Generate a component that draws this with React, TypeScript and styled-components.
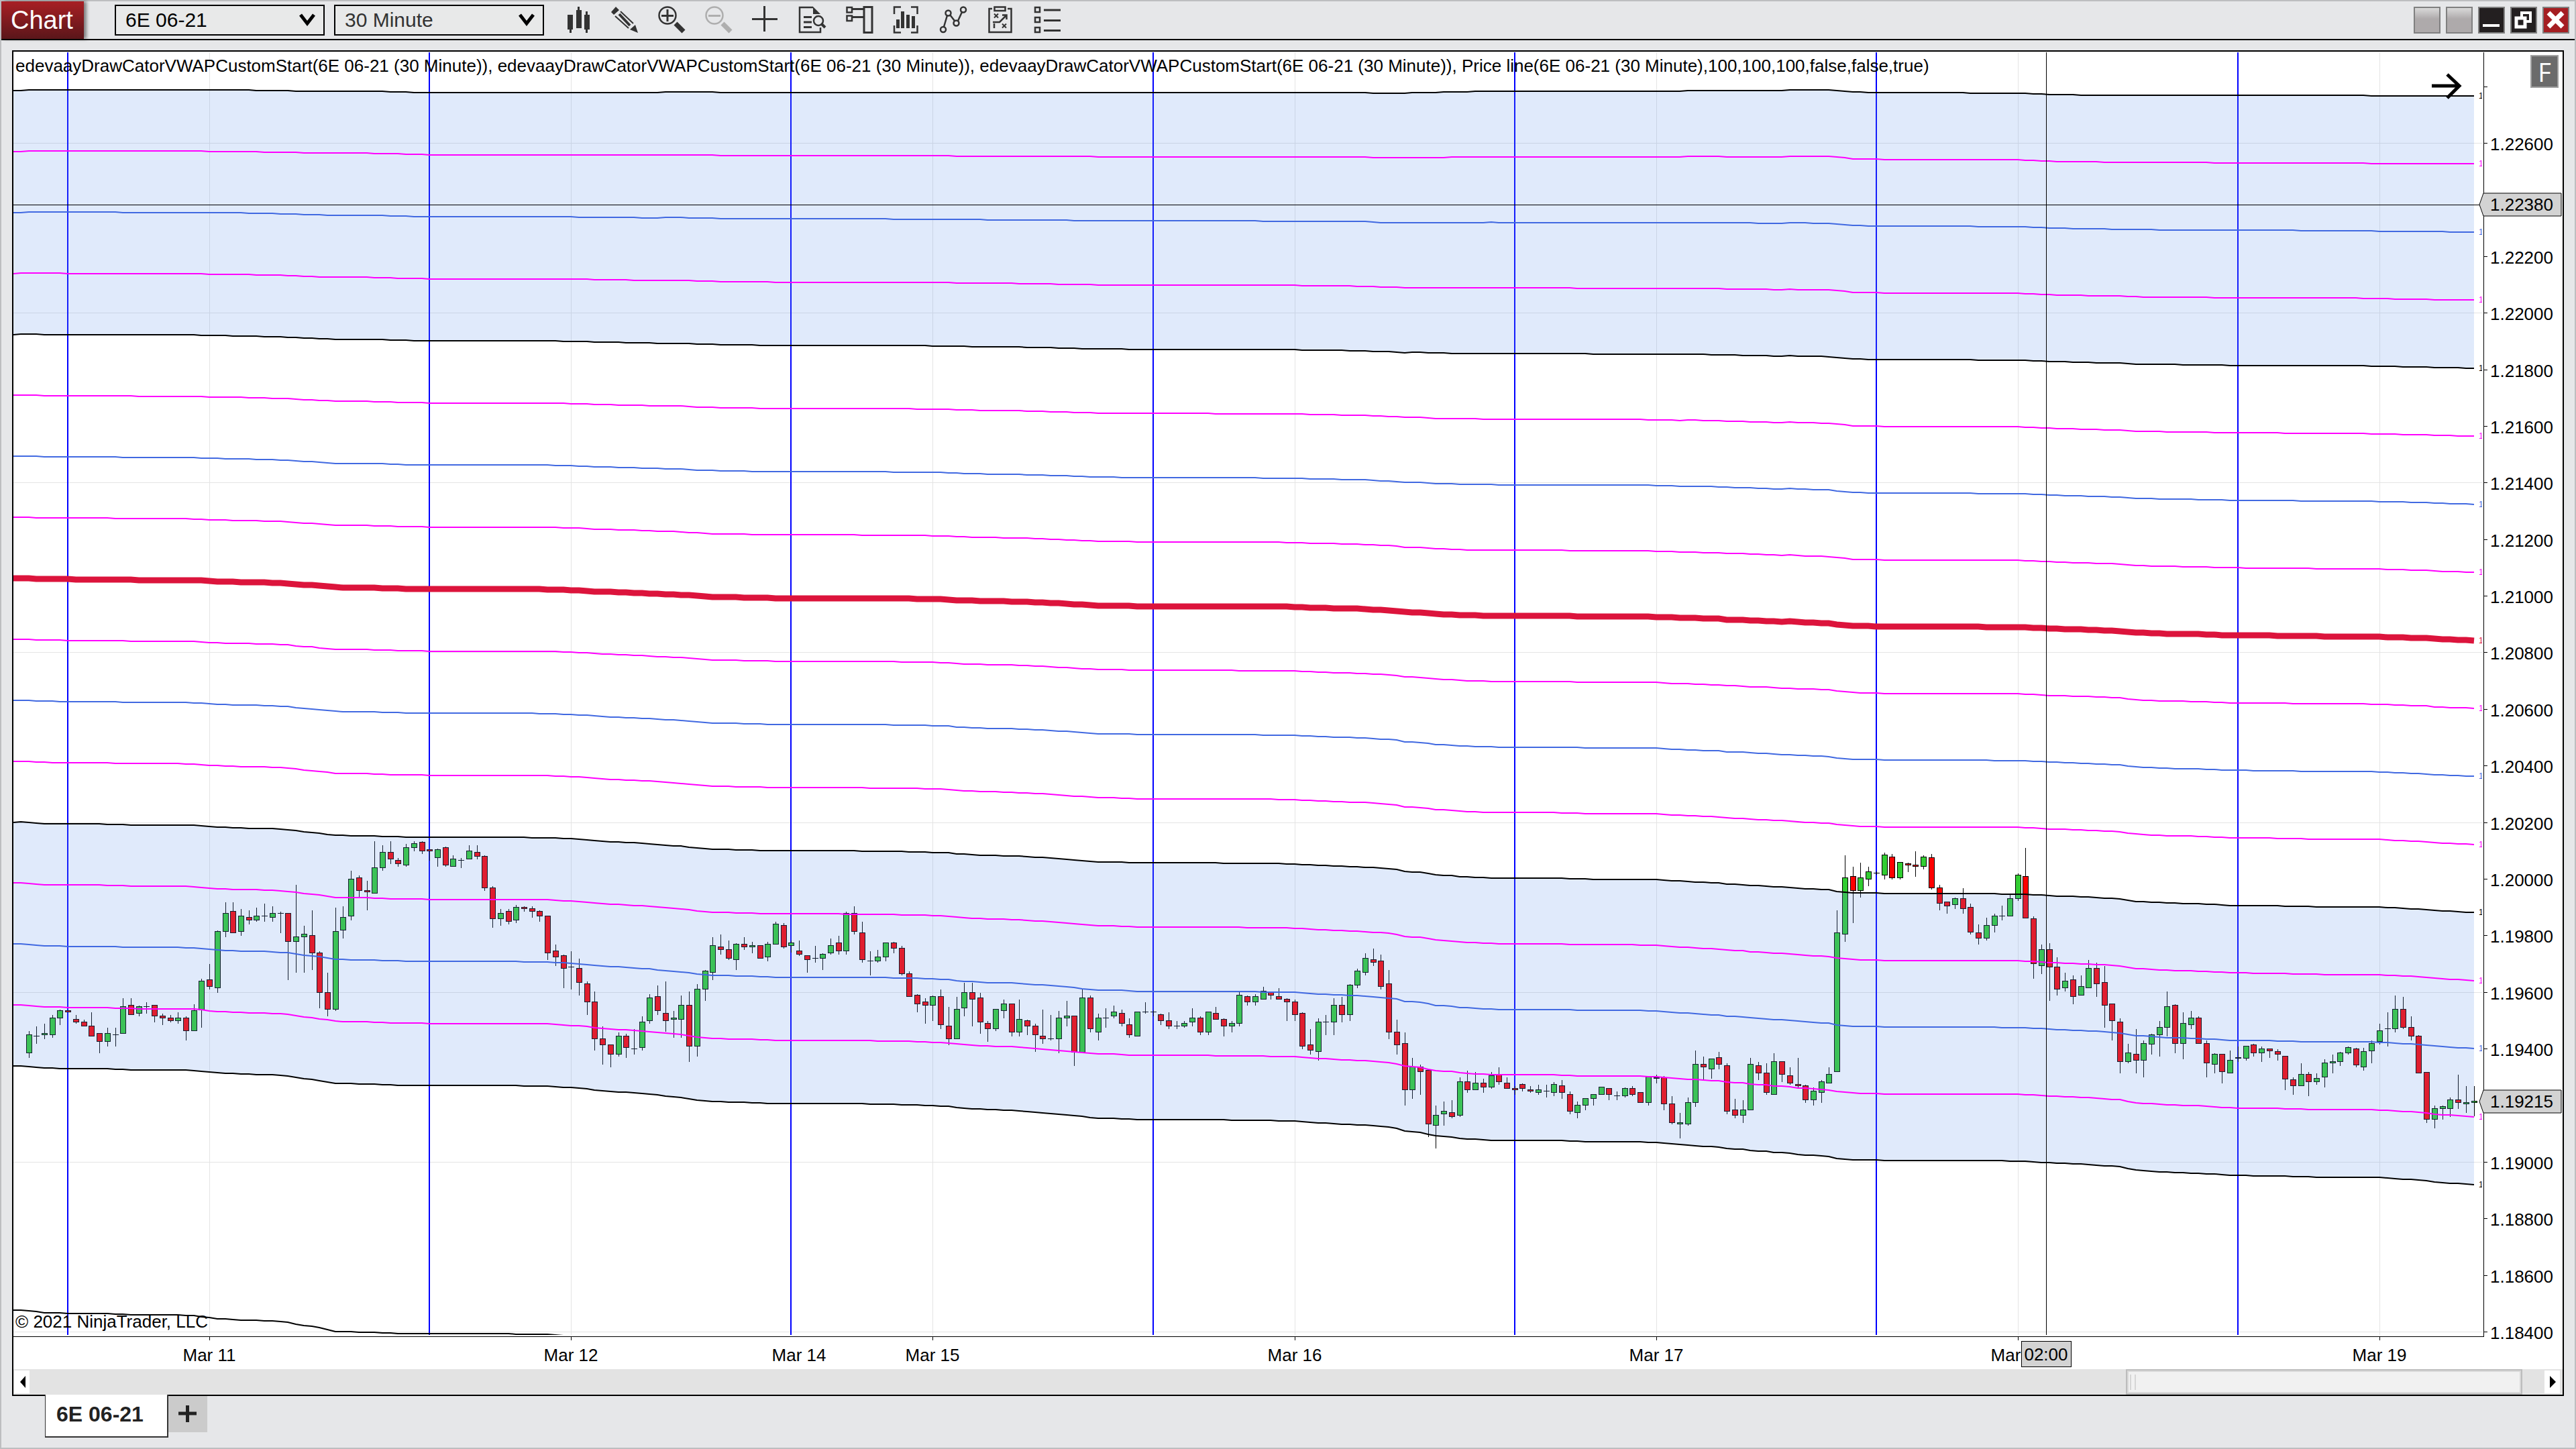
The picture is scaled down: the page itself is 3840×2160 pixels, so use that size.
import React from 'react';
import styled, { createGlobalStyle } from 'styled-components';

const GlobalStyle = createGlobalStyle`
  *, *::before, *::after { box-sizing: border-box; }
  body {
    margin: 0;
    background: #e6e7e9;
    font-family: "Liberation Sans", Arial, sans-serif;
    color: #000;
  }
  button, select { font-family: inherit; }
`;

const Frame = styled.div`
  display: flex;
  flex-direction: column;
  min-height: 100vh;
  border: 2px solid #bdbec0;
  background: #e6e7e9;
`;

const TitleBar = styled.header`
  display: flex;
  align-items: center;
  height: 58px;
  border-bottom: 2px solid #000;
  padding-right: 8px;
`;

const Title = styled.h1`
  margin: 0 46px 0 0;
  padding: 0 14px;
  width: 123px;
  align-self: stretch;
  display: flex;
  align-items: center;
  font-size: 38px;
  font-weight: 400;
  line-height: 56px;
  color: #fff;
  background: linear-gradient(#a81f24, #5a161a);
  box-shadow: 4px 0 5px rgba(0, 0, 0, 0.45);
`;

const Picker = styled.label<{ $gap: number }>`
  position: relative;
  display: block;
  width: 313px;
  margin-right: ${(p) => p.$gap}px;
`;

const PickerSelect = styled.select<{ $muted?: boolean }>`
  display: block;
  appearance: none;
  width: 100%;
  height: 46px;
  padding: 0 40px 0 14px;
  border: 2px solid #000;
  border-radius: 0;
  background: #e8e9e9;
  color: ${(p) => (p.$muted ? '#333' : '#000')};
  font-size: 30px;
  line-height: 40px;
`;

const PickerArrow = styled.svg`
  position: absolute;
  right: 14px;
  top: 12px;
  width: 24px;
  height: 22px;
  pointer-events: none;
`;

const Tools = styled.nav`
  display: flex;
  gap: 30px;
`;

const ToolButton = styled.button`
  width: 40px;
  height: 40px;
  padding: 0;
  border: 0;
  background: none;
  color: #333;

  &:disabled { color: #aeaeae; }

  svg {
    display: block;
    width: 40px;
    height: 40px;
    overflow: visible;
    fill: none;
    stroke: currentColor;
    stroke-width: 3;
  }
`;

const WindowButtons = styled.div`
  display: flex;
  gap: 8px;
  margin-left: auto;
`;

const WindowButton = styled.button<{ $face: string }>`
  width: 40px;
  height: 40px;
  padding: 0;
  border: 2px solid #808080;
  background: ${(p) => p.$face};

  svg { display: block; width: 36px; height: 36px; }
`;

const ChartPanel = styled.main`
  margin: 15px 16px 0;
  border: 2px solid #000;
  background: #fff;
`;

const ChartArea = styled.section`
  position: relative;
`;

const ChartDrawing = styled.svg`
  display: block;
  width: 100%;
  height: auto;

  text { font-size: 26px; fill: #000; }
  .marker { font-size: 12px; }
`;

const ChartNote = styled.p<{ $edge: 'top' | 'bottom' }>`
  position: absolute;
  left: 3px;
  ${(p) => (p.$edge === 'top' ? 'top: 6px;' : 'bottom: 56px;')}
  margin: 0;
  font-size: 26px;
  line-height: 30px;
  white-space: nowrap;
`;

const FixedButton = styled.button`
  position: absolute;
  top: 5px;
  right: 6px;
  width: 42px;
  height: 49px;
  padding: 0;
  border: 2px solid #a0a0a0;
  background: #6b6b6b;
  color: #fff;
  font-family: "Open Sans", sans-serif;
  font-size: 38px;
  line-height: 44px;
`;

const ScrollTrack = styled.div`
  display: flex;
  align-items: center;
  height: 38px;
  padding: 0 4px 0 1px;
  background: #e3e3e3;
`;

const ScrollArrow = styled.button`
  width: 23px;
  height: 34px;
  padding: 0;
  border: 0;
  background: #fff;

  svg { display: block; width: 23px; height: 34px; }
`;

const ScrollLane = styled.div`
  flex: 1;
  display: flex;
  justify-content: flex-end;
  padding-right: 33px;
`;

const ScrollThumb = styled.div`
  display: flex;
  align-items: center;
  gap: 5px;
  width: 591px;
  height: 38px;
  padding-left: 4px;
  border: 2px solid #bdbdbd;
  outline: 2px solid #d9d9d9;
  outline-offset: -4px;
  background: #f1f1f1;
`;

const Grip = styled.span`
  width: 2px;
  height: 23px;
  background: #d6d6d6;
`;

const TabStrip = styled.footer`
  display: flex;
  align-items: flex-start;
  flex: 1;
  padding: 0 65px;
`;

const Tab = styled.button`
  position: relative;
  width: 184px;
  height: 64px;
  margin-top: -2px;
  padding: 0 16px 4px;
  border: solid #333;
  border-width: 0 2px 2px 1px;
  background: #fff;
  color: #222;
  font-size: 32px;
  font-weight: 700;
  line-height: 56px;
  text-align: left;
  white-space: nowrap;
`;

const AddTab = styled.button`
  width: 58px;
  height: 54px;
  padding: 0;
  border: 0;
  background: #cbcbcb;

  svg { display: block; width: 58px; height: 54px; }
`;

/* ---------- chart data ---------- */

type Segment = { origin: number; unit: number; bars: string };

// One bar: kind (u = up, d = down, x = unchanged) then high, body top, body bottom, low.
const SEGMENTS: Segment[] = [
  {
    origin: 1180,
    unit: 3,
    bars: `u1072 1087 1169 1190,x1050 1093 1093 1128,u1038 1081 1088 1106,u1000 1012 1088 1100,u975 979 1013 1044,
d979 979 986 986,d1000 1018 1031 1037,d1020 1030 1049 1049,d987 1048 1094 1094,d1081 1081 1118 1169,
u1057 1081 1118 1139,x1057 1087 1087 1139,u924 961 1082 1082,d924 955 998 998,u957 961 992 1004,
x942 961 961 992,d955 955 1004 1031,d992 1003 1013 1043,d1000 1012 1025 1031,u987 1012 1025 1037,
d1005 1012 1070 1113,u951 979 1070 1070,u837 847 979 1055,d771 841 872 884,u621 625 878 899,
u495 544 626 651,d495 535 632 632,u525 556 626 644,d531 562 575 594,u519 556 575 581,
x501 556 556 581,u514 544 563 581,x537 544 544 632,d544 544 671 843,u417 649 671 810,
u600 637 650 810,d531 643 722 797,d714 721 899 969,d810 898 974 1005,u519 625 974 980,
u514 562 620 656,u354 391 557 575,d375 385 443 472,d399 442 449 531,u222 340 455 455,
u240 271 341 353,d222 271 302 323,d297 307 323 335,u234 250 329 335,u222 232 251 266,
d222 226 266 278,d258 259 266 310,u255 259 296 335,d247 250 329 335,u286 301 335 335,
x297 307 307 341,u240 265 302 302,d240 271 290 302,d286 289 431 443,d423 430 569 608,
u525 544 569 599,d525 535 581 594,u507 517 575 587,d514 517 524 537,d514 523 536 563,
d531 535 557 581,d556 556 722 752,d684 712 740 779,d729 733 791 879,x714 784 784 884,
d747 790 854 911,d850 859 941 998,d894 940 1106 1158,d1050 1105 1133 1221,d1132 1132 1175 1233,
u1077 1093 1175 1185,d1083 1093 1145 1190,x1062 1150 1150 1175,u1005 1030 1145 1158,u906 922 1025 1037,
d867 916 980 998,d850 991 1025 1075`,
  },
  {
    origin: 1300,
    unit: 3,
    bars: `u621 652 659 741,u552 595 659 741,d534 595 779 849,u501 523 779 825,u438 442 524 576,
u291 328 449 483,d279 334 347 369,d306 346 386 393,u318 322 392 437,d291 322 335 348,
u312 328 335 363,d328 328 386 386,u312 322 380 399,u222 232 323 323,d228 238 335 342,
u305 316 329 360,d306 352 368 375,d373 373 392 450,x330 385 385 405,u363 367 386 437,
u297 328 362 369,d285 316 353 369,u178 184 353 369,d153 184 266 278,d222 271 392 405,
x354 397 397 461,u348 379 398 405,u316 316 380 399,d312 316 341 363,d330 340 455 461,
d444 454 557 557,d546 550 590 627,d565 580 597 678,u552 556 596 665,d525 556 683 701,
d603 688 746 773,u558 613 746 746,u495 538 608 644,d495 538 569 690,d541 562 671 722,
d666 676 701 758,u613 613 701 711,u570 589 620 654,d589 589 716 735,u570 658 716 735,
d660 664 689 729,d678 688 728 804,d615 733 746 768,x639 745 745 752,u621 652 746 810,
u576 643 653 690,d643 643 808 866,u525 562 808 808,d552 562 701 716,u633 652 716 752,
x609 652 652 696,u597 625 644 654,d615 631 677 690,d654 682 728 741,u625 625 734 734,
x582 625 625 633,x617 625 625 644,d633 637 665 684,d627 664 689 701,x666 688 688 701,
u666 676 689 696,u609 652 671 690,d645 652 716 728,u625 625 716 728,d603 631 659 659,
d654 658 689 735,u666 676 689 716,u538 550 677 690,d552 556 581 597,u546 556 581 597,
u513 532 569 569,d538 538 551 570,d519 556 569 569,d565 568 581 665`,
  },
  {
    origin: 1360,
    unit: 3,
    bars: `d390 400 458 486,d447 451 599 612,d522 592 617 635,u474 490 623 662,x459 490 490 549,
u384 415 491 549,d378 415 458 491,u321 325 458 486,u252 262 326 339,u183 205 269 281,
d162 211 224 240,d189 217 332 345,d258 319 536 567,d480 535 593 635,d537 586 794 864,
u651 690 794 834,d681 691 713 815,d701 706 947 1004,u864 907 953 1056,u846 889 902 953,
d840 895 914 920,u738 757 908 914,d708 757 794 806,u714 763 794 794,d744 763 782 806,
u714 730 782 788,d693 727 758 770,d738 763 788 788,d777 787 794 815,d765 769 788 801,
d777 793 800 806,u771 793 806 815,x771 799 799 828,u759 769 806 822,d750 775 806 834,
d801 814 890 903,u846 862 896 920,u832 832 863 884,u814 814 833 864,u781 781 815 815,
d787 787 815 839,x801 820 820 839,u783 787 821 827,d777 787 815 822,d805 805 851 851,
u735 735 851 864,u726 738 743 765,d732 737 857 884,d822 856 941 947,u897 940 947 1011,
u828 850 947 953,u618 679 851 869,d645 679 692 752,u655 655 701 744,d624 649 680 701,
d675 685 890 903,d834 883 908 920,u840 883 908 941,u651 679 884 884,d669 685 719 750,
d675 718 806 815,u630 667 815 815,d667 667 725 758,d693 730 764 770,d651 769 776 788,
d771 775 839 852,u783 799 839 864,u750 757 806 852,u693 724 764 764`,
  },
  {
    origin: 1240,
    unit: 2.904,
    bars: `u340 437 1039 1039,u102 198 443 475,d151 193 255 394,u134 198 255 284,u151 172 205 235,
x170 178 178 185,u90 100 188 206,d96 106 199 206,u132 132 199 206,d134 137 144 174,
d84 143 150 195,u102 106 150 162,d96 111 243 249,d229 242 310 340,d303 303 321 354,
u285 288 316 334,d244 288 333 354,d311 326 437 443,d401 436 461 488,u372 405 461 470,
u354 364 406 437,x318 364 364 382,u273 288 365 365,u180 187 289 298,d70 193 376 376,
d366 376 571 636,u488 509 580 615,d482 509 586 732,d543 585 681 709,u610 646 676 691,
d621 640 713 746,u621 669 708 708,u555 590 676 676,d566 590 658 714,d581 651 751 848,
d744 744 818 903,d807 823 995 1045,u918 956 995 1001,d854 962 989 1045,u903 916 989 1062,
u874 878 922 964,u819 846 879 973,u691 756 847 885,d746 750 917 958,u781 829 917 984,
u775 805 835 854,d799 805 917 917,d903 916 1001 1062,u958 962 1007 1045,d962 962 1039 1088,
u947 988 1044 1044,u930 977 983 995,u927 927 983 990,d918 921 957 973,u930 939 957 995,
d938 939 951 979,d941 951 963 990,d971 971 1073 1118,d1062 1072 1100 1137,u1002 1049 1100 1100,
d1040 1049 1082 1143,u1045 1067 1082 1094,u984 1000 1062 1106,u964 994 1001 1045,u952 956 995 1013,
u930 933 957 963,d935 939 1012 1018,u935 951 1018 1033,u903 916 951 1002,u831 860 908 922,
x781 852 852 929,u709 768 853 868,d714 768 847 853,d799 846 885 902,d880 884 1044 1044,
d1039 1039 1245 1259,u1186 1197 1245 1283,u1186 1189 1198 1245,u1149 1160 1198 1233,d1051 1160 1172 1199,
u1102 1171 1178 1216,u1102 1165 1172 1230`,
  },
];

const FIRST_BAR_X = 42.6;
const BAR_STEP = 11.72;
const barX = (i: number) => Math.round(FIRST_BAR_X + BAR_STEP * i);

const CANDLES = SEGMENTS.flatMap((s) =>
  s.bars.split(',').map((raw) => {
    const token = raw.trim();
    const [high, top, bottom, low] = token
      .slice(1)
      .split(' ')
      .map((v) => Math.round(s.origin + Number(v) / s.unit));
    return { kind: token[0], high, top, bottom, low };
  }),
);

type Knot = [number, number];

const UPPER: Knot[] = [
  [20, 135], [60, 134], [360, 134], [400, 135], [470, 136], [560, 136], [630, 138], [980, 138], [1000, 137],
  [1060, 137], [1080, 138], [2035, 138], [2050, 139], [2085, 139], [2110, 138], [2170, 137], [2220, 136],
  [2505, 136], [2520, 135], [2650, 135], [2670, 134], [2725, 134], [2740, 135], [2760, 137], [2790, 138],
  [2920, 138], [2950, 139], [3010, 139], [3060, 141], [3140, 142], [3520, 142], [3540, 143], [3688, 143],
];

const LOWER: Knot[] = [
  [20, 1589], [35, 1589], [64, 1592], [102, 1593], [150, 1593], [204, 1595], [265, 1595], [293, 1596],
  [319, 1599], [357, 1601], [402, 1602], [429, 1604], [453, 1608], [466, 1609], [501, 1615], [548, 1616],
  [606, 1618], [733, 1618], [816, 1619], [848, 1621], [874, 1623], [886, 1625], [912, 1627], [957, 1630],
  [978, 1632], [992, 1634], [1015, 1636], [1040, 1640], [1061, 1642], [1107, 1643], [1156, 1645],
  [1254, 1645], [1321, 1646], [1367, 1647], [1413, 1649], [1425, 1651], [1471, 1654], [1508, 1655],
  [1548, 1658], [1591, 1662], [1609, 1664], [1637, 1667], [1664, 1667], [1695, 1669], [1787, 1669],
  [1878, 1670], [1929, 1671], [1952, 1673], [1986, 1675], [2029, 1677], [2068, 1680], [2082, 1682],
  [2093, 1686], [2117, 1688], [2140, 1693], [2166, 1695], [2176, 1697], [2231, 1700], [2316, 1700],
  [2365, 1702], [2436, 1702], [2469, 1703], [2542, 1709], [2564, 1710], [2574, 1712], [2598, 1713],
  [2610, 1715], [2632, 1716], [2646, 1718], [2671, 1719], [2681, 1721], [2727, 1724], [2739, 1727],
  [2763, 1729], [2797, 1729], [2809, 1730], [2953, 1730], [3019, 1731], [3051, 1733], [3114, 1736],
  [3159, 1739], [3184, 1744], [3226, 1747], [3279, 1749], [3324, 1752], [3394, 1753], [3458, 1755],
  [3542, 1755], [3619, 1760], [3630, 1762], [3688, 1766],
];

const sample = (knots: Knot[], x: number) => {
  const next = knots.findIndex((k) => k[0] >= x);
  if (next <= 0) return knots[next === 0 ? 0 : knots.length - 1][1];
  const [x0, y0] = knots[next - 1];
  const [x1, y1] = knots[next];
  return y0 + ((y1 - y0) * (x - x0)) / (x1 - x0);
};

const LINE_X = [20, 31, ...CANDLES.map((_, i) => barX(i))];

// Bands are equally spaced around the VWAP; step 0 is the top band and step 16 the bottom one.
const bandPoints = (step: number): Knot[] =>
  LINE_X.map((x) => {
    const upper = sample(UPPER, x);
    return [x, Math.round(upper + ((sample(LOWER, x) - upper) * step) / 16)];
  });

const toPath = (points: Knot[]) => points.map(([x, y]) => `${x},${y}`).join(' ');

const BLACK = '#000';
const MAGENTA = '#ff00ff';
const BLUE = '#4169e1';
const CRIMSON = '#dc143c';

const BANDS = [...Array.from({ length: 17 }, (_, i) => i), 20].map((step) => {
  let color = MAGENTA;
  if (step === 8) color = CRIMSON;
  else if (step % 4 === 0) color = BLACK;
  else if (step % 2 === 0) color = BLUE;
  const points = bandPoints(step);
  return { step, color, points, width: step === 8 ? 9 : 2, end: points[points.length - 1][1] };
});

const ZONES = [[0, 4], [12, 16]].map(([a, b]) =>
  toPath([...bandPoints(a), ...bandPoints(b).reverse()]),
);

const PRICE_TOP = 1.226;
const priceY = (price: number) => Math.round(213 + ((PRICE_TOP - price) * 1772) / 0.042);
const PRICES = Array.from({ length: 22 }, (_, i) => PRICE_TOP - i * 0.002);
const SESSIONS = [5, 51, 97, 143, 189, 235, 281].map(barX);
const DATES = [
  { bar: 23, label: 'Mar 11', tick: true },
  { bar: 69, label: 'Mar 12', tick: true },
  { bar: 98, label: 'Mar 14', tick: false },
  { bar: 115, label: 'Mar 15', tick: true },
  { bar: 161, label: 'Mar 16', tick: true },
  { bar: 207, label: 'Mar 17', tick: true },
  { bar: 253, label: 'Mar 18', tick: true },
  { bar: 299, label: 'Mar 19', tick: true },
].map((d) => ({ ...d, x: barX(d.bar) }));

const LEGEND =
  'edevaayDrawCatorVWAPCustomStart(6E 06-21 (30 Minute)), edevaayDrawCatorVWAPCustomStart(6E 06-21 (30 Minute)), edevaayDrawCatorVWAPCustomStart(6E 06-21 (30 Minute)), Price line(6E 06-21 (30 Minute),100,100,100,false,false,true)';

const COLORS: Record<string, string> = { u: '#32cd32', d: '#ff0000' };

const Candle = ({ x, bar }: { x: number; bar: (typeof CANDLES)[number] }) => (
  <g stroke="#000">
    <path d={`M${x + 0.5} ${bar.high}V${bar.top}M${x + 0.5} ${bar.bottom}V${bar.low}`} />
    {bar.kind === 'x' ? (
      <path d={`M${x - 4} ${bar.top + 0.5}h9`} />
    ) : (
      <rect
        x={x - 3.5}
        y={bar.top + 0.5}
        width={8}
        height={Math.max(1, bar.bottom - bar.top - 1)}
        fill={COLORS[bar.kind]}
      />
    )}
  </g>
);

const PriceTag = ({ y, label }: { y: number; label: string }) => (
  <g>
    <path d={`M3696 ${y}L3702 ${y - 17}H3818V${y + 17}H3702Z`} fill="#d3d3d3" stroke="#000" />
    <text x={3712} y={y + 9}>{label}</text>
  </g>
);

const PriceChart = () => (
  <ChartDrawing viewBox="20 77 3800 1964" role="img" aria-label="6E 06-21 30 minute chart">
    <defs>
      <clipPath id="plot"><rect x={20} y={77} width={3682} height={1913} /></clipPath>
      <clipPath id="markers"><rect x={3690} y={77} width={10} height={1913} /></clipPath>
    </defs>

    <g clipPath="url(#plot)">
      <g stroke="#e4e4e4" shapeRendering="crispEdges">
        {PRICES.filter((_, i) => i % 3 === 0).map((p) => (
          <path key={p} d={`M20 ${priceY(p) + 0.5}H3701`} />
        ))}
        {DATES.filter((d) => d.tick).map((d) => (
          <path key={d.bar} d={`M${d.x + 0.5} 78V1990`} />
        ))}
      </g>
      <g stroke="#0000ff" strokeWidth={2} shapeRendering="crispEdges">
        {SESSIONS.map((x) => <path key={x} d={`M${x} 78V1990`} />)}
      </g>
      <g shapeRendering="crispEdges">
        {CANDLES.map((bar, i) => <Candle key={i} x={barX(i)} bar={bar} />)}
      </g>
      {ZONES.map((z) => <polygon key={z.slice(0, 20)} points={z} fill="#6495ed" fillOpacity={0.2} />)}
      {BANDS.map((b) => (
        <polyline key={b.step} points={toPath(b.points)} fill="none" stroke={b.color} strokeWidth={b.width} />
      ))}
      <path d="M3050.5 78V1990M20 305.5H3696" stroke="#000" shapeRendering="crispEdges" />
    </g>

    <g clipPath="url(#markers)">
      {BANDS.filter((b) => b.step <= 16).map((b) => (
        <text key={b.step} className="marker" x={3695} y={b.end + 4} style={{ fill: b.color }}>1</text>
      ))}
    </g>

    <g stroke="#000" shapeRendering="crispEdges">
      <path d="M3702.5 78V1992.5M20 1992.5H3703" />
      <path d="M3703 129.5h5" />
      {PRICES.map((p) => <path key={p} d={`M3703 ${priceY(p) + 0.5}h5`} />)}
      {DATES.filter((d) => d.tick).map((d) => <path key={d.bar} d={`M${d.x + 0.5} 1993v5`} />)}
    </g>

    {PRICES.filter((_, i) => i !== 1).map((p) => (
      <text key={p} x={3712} y={priceY(p) + 11}>{p.toFixed(5)}</text>
    ))}
    {DATES.map((d) => (
      <text key={d.bar} x={d.x} y={2029} textAnchor="middle">{d.label}</text>
    ))}

    <PriceTag y={305} label="1.22380" />
    <PriceTag y={1642} label="1.19215" />
    <rect x={3013.5} y={1999.5} width={74} height={38} fill="#d3d3d3" stroke="#000" />
    <text x={3050} y={2028} textAnchor="middle">02:00</text>

    <path d="M3625 128H3667M3648 111L3666 128L3648 146" fill="none" stroke="#000" strokeWidth={5} />
  </ChartDrawing>
);

/* ---------- toolbar drawings ---------- */

const Solid = ({ d }: { d: string }) => <path d={d} fill="currentColor" stroke="none" />;

const TOOLS: { name: string; disabled?: boolean; art: React.ReactNode }[] = [
  {
    name: 'Chart style',
    art: <Solid d="M5 12h8v22H11v5H8v-5H5zM20 0h3v5h3v27h-8V5h2zM32 7h3v5h3v22h-3v5h-3v-5h-2V12h2z" />,
  },
  {
    name: 'Drawing tools',
    art: (
      <>
        <Solid d="M0 8L7 0L12 5L4 12ZM28 34L36 27L40 39Z" />
        <path d="M6 14L26 32M14 7L33 25" strokeWidth={2} />
        <path d="M12 11L28 28" strokeWidth={4} />
      </>
    ),
  },
  {
    name: 'Zoom in',
    art: (
      <>
        <circle cx={14} cy={13} r={12.5} strokeWidth={2.5} />
        <path d="M5 13.5H23M14 4V22" />
        <path d="M26 25L38 37" strokeWidth={7} />
      </>
    ),
  },
  {
    name: 'Zoom out',
    disabled: true,
    art: (
      <>
        <circle cx={14} cy={13} r={12.5} strokeWidth={2.5} />
        <path d="M5 13.5H23" />
        <path d="M26 25L38 37" strokeWidth={7} />
      </>
    ),
  },
  { name: 'Crosshair', art: <path d="M0 18.5H38M18.5 -1V37" /> },
  {
    name: 'Data box',
    art: (
      <>
        <path d="M21 1H1V38H32V31" strokeWidth={2.5} />
        <Solid d="M21 0L32 11H21Z" />
        <path d="M7 15.5H19M7 23H19M7 30.5H19" />
        <circle cx={29} cy={21} r={7} strokeWidth={2.5} />
        <path d="M33 25L39 31" strokeWidth={4} />
      </>
    ),
  },
  {
    name: 'Chart trader',
    art: (
      <>
        <rect x={1.5} y={1} width={7.5} height={7.5} strokeWidth={2.5} />
        <rect x={1.5} y={13.5} width={7.5} height={7.5} strokeWidth={2.5} />
        <path d="M10 3.5H26M10 15.5H26" />
        <rect x={27} y={0.5} width={12} height={38} />
      </>
    ),
  },
  {
    name: 'Data series',
    art: (
      <>
        <path d="M2 11V0.5H12M27 0.5H36.5V11M2 28V38.5H12M27 38.5H36.5V28" strokeWidth={2.5} />
        <Solid d="M5 19h5v13h-5zM12 7h5v25h-5zM20 12h5v20h-5zM28 14h5v18h-5z" />
      </>
    ),
  },
  {
    name: 'Indicators',
    art: (
      <>
        <path d="M6 30L11 13M15 12L22 21M27 21L33 8" strokeWidth={2.5} />
        <circle cx={5} cy={34} r={4} strokeWidth={2.5} />
        <circle cx={12.5} cy={9.5} r={4} strokeWidth={2.5} />
        <circle cx={24.5} cy={24.5} r={4} strokeWidth={2.5} />
        <circle cx={35} cy={4.5} r={4} strokeWidth={2.5} />
      </>
    ),
  },
  {
    name: 'Strategies',
    art: (
      <>
        <path d="M8 3H3.5V38H36.5V3H31" strokeWidth={2.5} />
        <rect x={11.5} y={0.5} width={16} height={5.5} strokeWidth={2.5} />
        <path d="M11 10.5L17 16.5M17 10.5L11 16.5M23 25.5L29 31.5M29 25.5L23 31.5" strokeWidth={2} />
        <path d="M9 23H19L29 13M23 12.5H29.5V19M11 25V32" strokeWidth={2.5} />
      </>
    ),
  },
  {
    name: 'Properties',
    art: (
      <>
        <rect x={2} y={1} width={7} height={7} strokeWidth={2.5} />
        <rect x={2} y={16} width={7} height={7} strokeWidth={2.5} />
        <rect x={2} y={31} width={7} height={7} strokeWidth={2.5} />
        <path d="M15 5H40M15 20.5H40M15 35.5H40" />
      </>
    ),
  },
];

const GREY_FACE = 'linear-gradient(#d9d9d9, #aeaaab 45%, #aeaaab)';
const DARK_FACE = '#231f20';

const Arrow = () => (
  <PickerArrow viewBox="0 0 24 22" aria-hidden="true">
    <path d="M2 3L12 16L22 3" fill="none" stroke="#000" strokeWidth={5} />
  </PickerArrow>
);

export default function App() {
  return (
    <>
      <GlobalStyle />
      <Frame>
        <TitleBar>
          <Title>Chart</Title>
          <Picker $gap={14}>
            <PickerSelect aria-label="Instrument" defaultValue="6E 06-21">
              <option>6E 06-21</option>
            </PickerSelect>
            <Arrow />
          </Picker>
          <Picker $gap={30}>
            <PickerSelect $muted aria-label="Interval" defaultValue="30 Minute">
              <option>30 Minute</option>
            </PickerSelect>
            <Arrow />
          </Picker>
          <Tools aria-label="Chart tools">
            {TOOLS.map((t) => (
              <ToolButton key={t.name} type="button" aria-label={t.name} disabled={t.disabled}>
                <svg viewBox="0 0 40 40">{t.art}</svg>
              </ToolButton>
            ))}
          </Tools>
          <WindowButtons>
            <WindowButton $face={GREY_FACE} type="button" aria-label="Instrument link" />
            <WindowButton $face={GREY_FACE} type="button" aria-label="Interval link" />
            <WindowButton $face={DARK_FACE} type="button" aria-label="Minimize">
              <svg viewBox="0 0 36 36"><path d="M5 26H30" stroke="#fff" strokeWidth={4} /></svg>
            </WindowButton>
            <WindowButton $face={DARK_FACE} type="button" aria-label="Restore">
              <svg viewBox="0 0 36 36" fill="none" stroke="#fff" strokeWidth={4}>
                <path d="M15 15V7H28V20H22" />
                <rect x={7} y={15} width={13} height={13} fill={DARK_FACE} strokeWidth={5} />
              </svg>
            </WindowButton>
            <WindowButton $face="#a51e22" type="button" aria-label="Close">
              <svg viewBox="0 0 36 36"><path d="M7 7L28 28M28 7L7 28" stroke="#fff" strokeWidth={7} /></svg>
            </WindowButton>
          </WindowButtons>
        </TitleBar>

        <ChartPanel>
          <ChartArea>
            <PriceChart />
            <ChartNote $edge="top">{LEGEND}</ChartNote>
            <ChartNote $edge="bottom">© 2021 NinjaTrader, LLC</ChartNote>
            <FixedButton type="button" aria-label="Fixed scale">F</FixedButton>
          </ChartArea>
          <ScrollTrack>
            <ScrollArrow type="button" aria-label="Scroll left">
              <svg viewBox="0 0 23 34"><path d="M9 17L17 8V26Z" /></svg>
            </ScrollArrow>
            <ScrollLane>
              <ScrollThumb>
                <Grip />
                <Grip />
              </ScrollThumb>
            </ScrollLane>
            <ScrollArrow type="button" aria-label="Scroll right">
              <svg viewBox="0 0 23 34"><path d="M17 17L8 8V26Z" /></svg>
            </ScrollArrow>
          </ScrollTrack>
        </ChartPanel>

        <TabStrip>
          <Tab type="button">6E 06-21</Tab>
          <AddTab type="button" aria-label="Add tab">
            <svg viewBox="0 0 58 54"><path d="M15 26H42M28.5 14V39" stroke="#222" strokeWidth={5} /></svg>
          </AddTab>
        </TabStrip>
      </Frame>
    </>
  );
}
